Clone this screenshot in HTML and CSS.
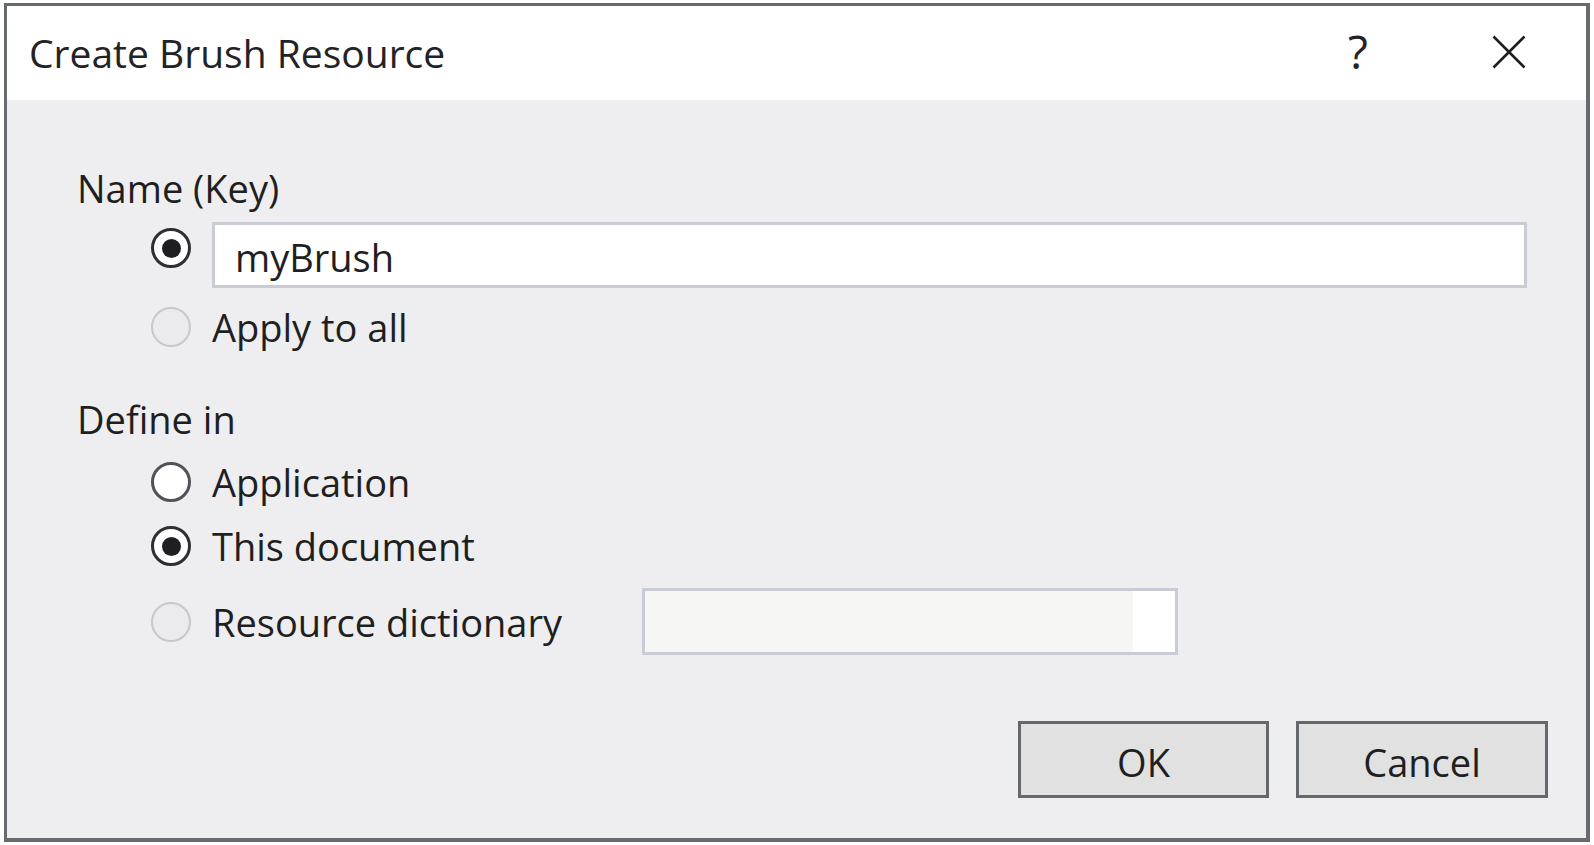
FILE: index.html
```
<!DOCTYPE html>
<html>
<head>
<meta charset="utf-8">
<link rel="stylesheet" href="styles.css">
</head>
<body>
<div class="dialog">
  <div class="titlebar">
    <span class="title">Create Brush Resource</span>
    <span class="help">?</span>
    <svg class="close" width="34" height="34" viewBox="0 0 34 34"><path d="M1.5 1.5 L32.5 32.5 M32.5 1.5 L1.5 32.5" stroke="#1f1f1f" stroke-width="2.6" fill="none"/></svg>
  </div>
  <div class="content">
    <div class="label label-name">Name (Key)</div>
    <div class="row row-key">
      <span class="radio checked"></span>
      <div class="input">myBrush</div>
    </div>
    <div class="row row-apply">
      <span class="radio disabled"></span>
      <span class="opt">Apply to all</span>
    </div>
    <div class="label label-define">Define in</div>
    <div class="row row-app">
      <span class="radio"></span>
      <span class="opt">Application</span>
    </div>
    <div class="row row-doc">
      <span class="radio checked"></span>
      <span class="opt">This document</span>
    </div>
    <div class="row row-res">
      <span class="radio disabled"></span>
      <span class="opt opt-res">Resource dictionary</span>
      <div class="resbox"></div>
    </div>
    <div class="buttons">
      <button class="btn btn-ok">OK</button>
      <button class="btn btn-cancel">Cancel</button>
    </div>
  </div>
</div>
</body>
</html>
```
FILE: styles.css
```
html, body {
  margin: 0;
  padding: 0;
  background: #ffffff;
}

body {
  font-family: "Open Sans", "Noto Sans", sans-serif;
  color: #1f1f22;
}

.dialog {
  margin: 3px 0 0 4px;
  width: 1586px;
  height: 839px;
  box-sizing: border-box;
  border-style: solid;
  border-color: #676a70;
  border-width: 3px 4px 4px 3px;
  display: flex;
  flex-direction: column;
  background: #eeeef0;
}

.titlebar {
  height: 94px;
  flex: none;
  background: #ffffff;
  display: flex;
  align-items: center;
  padding-left: 22px;
}

.title {
  font-size: 39px;
  line-height: 94px;
  color: #232326;
  flex: 1;
}

.help {
  font-size: 46px;
  line-height: 1;
  width: 19px;
  margin-bottom: 4px;
  color: #232326;
}

.close {
  display: block;
  margin-left: 125px;
  margin-right: 60px;
  margin-bottom: 3px;
}

.content {
  flex: 1;
  display: flex;
  flex-direction: column;
  padding-top: 66px;
  font-size: 38px;
}

.label {
  height: 44px;
  line-height: 44px;
  padding-left: 70px;
}

.label-define {
  margin-top: 48px;
}

.row {
  display: flex;
  align-items: center;
  height: 44px;
  padding-left: 144px;
}

.row-key {
  margin-top: 12px;
  height: 66px;
  align-items: flex-start;
}

.row-key .radio {
  margin-top: 6px;
}

.row-apply { margin-top: 17px; }
.row-app { margin-top: 19px; }
.row-doc { margin-top: 20px; }

.row-res {
  margin-top: 20px;
  height: 67px;
}

.radio {
  flex: none;
  width: 40px;
  height: 40px;
  box-sizing: border-box;
  border-radius: 50%;
  border: 3px solid #505257;
  background: #ffffff;
  display: flex;
  align-items: center;
  justify-content: center;
}

.radio.checked {
  border: 3.5px solid #2e2f33;
}

.radio.checked::after {
  content: "";
  width: 19px;
  height: 19px;
  border-radius: 50%;
  background: #1f1f22;
}

.radio.disabled {
  border: 2px solid #c6c8ce;
  background: #ebebed;
}

.opt {
  margin-left: 21px;
  line-height: 44px;
  white-space: nowrap;
}

.opt-res {
  width: 430px;
}

.input {
  margin-left: 21px;
  width: 1315px;
  height: 66px;
  box-sizing: border-box;
  border: 3px solid #c9ccd4;
  background: #ffffff;
  padding-left: 20px;
  padding-top: 2px;
  line-height: 60px;
}

.resbox {
  width: 536px;
  height: 67px;
  box-sizing: border-box;
  border: 3px solid #c9ccd4;
  background: linear-gradient(to right, #f6f6f4 calc(100% - 42px), #ffffff calc(100% - 42px));
}

.buttons {
  margin-top: 66px;
  display: flex;
  justify-content: flex-end;
  gap: 27px;
  padding-right: 38px;
}

.btn {
  width: 251px;
  height: 77px;
  box-sizing: border-box;
  border: 3px solid #64676c;
  background: #e1e1e1;
  font-family: "Open Sans", "Noto Sans", sans-serif;
  font-size: 38px;
  color: #1f1f22;
  padding: 4px 0 0 0;
  line-height: 66px;
  margin: 0;
}

.btn-cancel {
  width: 252px;
}
```
